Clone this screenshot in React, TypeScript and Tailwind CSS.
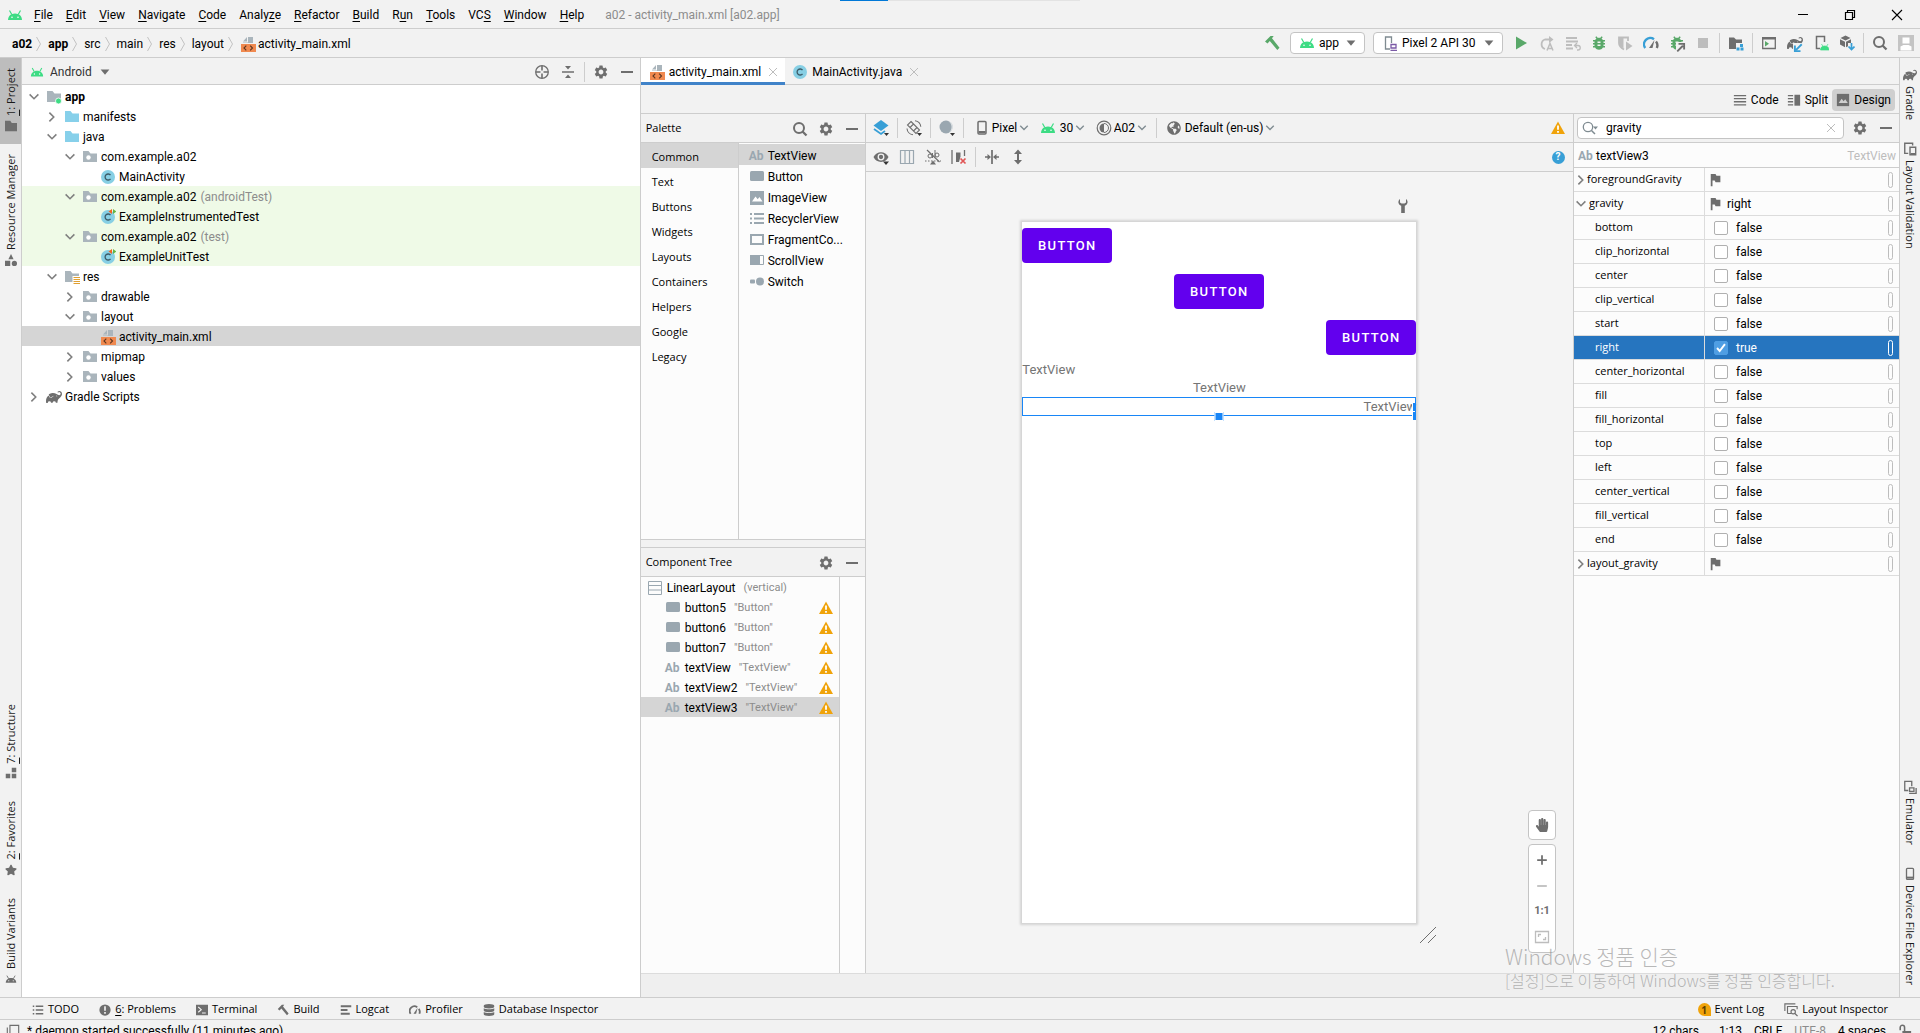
import React from 'react';
import { SiGradle } from 'react-icons/si';
import { MdSettings, MdBugReport } from 'react-icons/md';
import { FaHandPaper, FaDatabase, FaGlobeAmericas, FaStar } from 'react-icons/fa';

type IconProps = { className?: string };

const Svg: React.FC<{ className?: string; children: React.ReactNode }> = ({ className = 'w-4 h-4', children }) => (
  <svg viewBox="0 0 16 16" className={`shrink-0 ${className}`} fill="none" aria-hidden="true">
    {children}
  </svg>
);

/* ---------- Icons ---------- */

const AndroidIcon = ({ className }: IconProps) => (
  <Svg className={className}>
    <path d="M1 13C1 9.300 3.800 6.500 8 6.500S15 9.300 15 13Z" fill="currentColor" />
    <path d="M2.500 3.500 4.800 7.500M13.500 3.500 11.200 7.500" stroke="currentColor" strokeWidth="1.200" />
    <circle cx="5" cy="10.300" r=".8" fill="#fff" />
    <circle cx="11" cy="10.300" r=".8" fill="#fff" />
  </Svg>
);

const XmlFileIcon = ({ className }: IconProps) => (
  <Svg className={className}>
    <path d="M3 5.500 7 1v4.500ZM8 1h5v6H3V6.500h5Z" fill="#aab5bc" />
    <rect x="1" y="8" width="15" height="8" fill="#f0894f" />
    <path d="M6.300 9.700 4 12l2.300 2.300M10.200 9.700 12.500 12l-2.300 2.300" stroke="#5c3620" strokeWidth="1.100" />
  </Svg>
);

const ClassIcon = ({ className, test }: IconProps & { test?: boolean }) => (
  <Svg className={className}>
    <circle cx="8" cy="8" r="7" fill="#87cfe4" />
    <path d="M10.500 6.200a3 3 0 1 0 0 3.600" stroke="#3c5a66" strokeWidth="1.300" />
    {test && (
      <>
        <path d="M12 0v5L8.500 2.500Z" fill="#f26522" />
        <path d="M13 0v5l3.500-2.500Z" fill="#62b543" />
      </>
    )}
  </Svg>
);

const FolderIcon = ({ kind }: { kind: 'module' | 'blue' | 'package' | 'res' }) => (
  <Svg>
    <path d="M1 2h5.500L8.500 4.500H15V13H1Z" fill={kind === 'blue' ? '#87d0ea' : '#aab5bc'} />
    {kind === 'package' && <circle cx="6.500" cy="8.500" r="2.200" fill="#fff" />}
    {kind === 'module' && <circle cx="12.500" cy="12" r="3" fill="#3ddc84" stroke="#fff" strokeWidth=".8" />}
    {kind === 'res' && (
      <>
        <rect x="8.500" y="7" width="7.500" height="9" fill="#fff" />
        <path d="M9.500 8.500H16M9.500 10.500H16M9.500 12.500H16M9.500 14.500H16" stroke="#e0a030" />
      </>
    )}
  </Svg>
);

const SearchIcon = ({ className }: IconProps) => (
  <Svg className={className}>
    <circle cx="7" cy="7" r="5" stroke="currentColor" strokeWidth="2" />
    <path d="m10.500 10.500 4 4" stroke="currentColor" strokeWidth="2.300" />
  </Svg>
);

const MinusIcon = ({ className }: IconProps) => (
  <Svg className={className}>
    <path d="M2 8h12" stroke="currentColor" strokeWidth="2" />
  </Svg>
);

const CloseIcon = ({ className }: IconProps) => (
  <Svg className={className}>
    <path d="m4 4 8 8M12 4l-8 8" stroke="currentColor" />
  </Svg>
);

const CaretIcon = ({ className }: IconProps) => (
  <Svg className={className}>
    <path d="M3 5h10l-5 6Z" fill="currentColor" />
  </Svg>
);

const ChevronDown = ({ className }: IconProps) => (
  <Svg className={className}>
    <path d="m3 5 5 5 5-5" stroke="currentColor" strokeWidth="1.800" />
  </Svg>
);

const ChevronRight = ({ className }: IconProps) => (
  <Svg className={className}>
    <path d="m5 3 5 5-5 5" stroke="currentColor" strokeWidth="1.800" />
  </Svg>
);

const HammerIcon = ({ className }: IconProps) => (
  <Svg className={className}>
    <path d="M1 6.500 6.500 1h3.200L8 3.200 15.500 12.800 13.300 15 5.800 6 3.500 8.500Z" fill="currentColor" />
  </Svg>
);

const WarningIcon = ({ className }: IconProps) => (
  <Svg className={className}>
    <path d="M8 1.500 15 14H1Z" fill="#f0a30a" />
    <path d="M8 5.500v4.300M8 11v1.800" stroke="#fff" strokeWidth="1.800" />
  </Svg>
);

const GaugeIcon = ({ className, accent = 'currentColor' }: IconProps & { accent?: string }) => (
  <Svg className={className}>
    <path d="M2.200 13A6.300 6.300 0 0 1 11 4.200" stroke={accent} strokeWidth="2.400" />
    <path d="M13 6.500A6.300 6.300 0 0 1 13.800 13" stroke="currentColor" strokeWidth="2.400" />
    <path d="M6 13 11.500 5 9.500 13Z" fill="currentColor" />
  </Svg>
);

const FlagIcon = () => (
  <Svg className="w-3.5 h-3.5">
    <path d="M2 1h5.500l1 2H13v7.500H7.500l-1-2H4V15H2Z" fill="#6e6e6e" />
  </Svg>
);

const ImageIcon = ({ className, hill = '#fff' }: IconProps & { hill?: string }) => (
  <Svg className={className}>
    <path d="M1 1h14v14H1Z" fill="currentColor" />
    <path d="m3 11.500 3.500-5 2.200 2.800 1.800-2.300 3 4.500Z" fill={hill} />
  </Svg>
);

const ButtonWidgetIcon = () => (
  <Svg>
    <rect x="1" y="2" width="14" height="10" rx="1.500" fill="#9aa7b0" />
  </Svg>
);

const PhoneIcon = ({ className }: IconProps) => (
  <Svg className={className}>
    <rect x="4" y="1.500" width="8" height="12.500" rx="1" stroke="currentColor" strokeWidth="1.500" />
    <path d="M4.500 12h7" stroke="currentColor" strokeWidth="2" />
  </Svg>
);

const AbIcon = () => <span className="w-4 shrink-0 text-xs leading-4 font-bold text-[#9aa7b0]">Ab</span>;

/* ---------- Small shared parts ---------- */

const Separator = () => <div className="w-px h-5 bg-[#cdcdcd] shrink-0" />;

const IconButton: React.FC<{ label: string; className?: string; children: React.ReactNode }> = ({ label, className = '', children }) => (
  <button aria-label={label} className={`w-4 h-4 shrink-0 flex items-center justify-center text-[#6e6e6e] ${className}`}>
    {children}
  </button>
);

// Label with the mnemonic letter underlined
const Mnemonic = ({ text, at }: { text: string; at: number }) => (
  <>
    {text.slice(0, at)}
    <span className="underline underline-offset-2">{text[at]}</span>
    {text.slice(at + 1)}
  </>
);

const PlainSelect: React.FC<{ label: string; value: string; icon: React.ReactNode; className?: string; caret?: React.ReactNode }> = ({
  label,
  value,
  icon,
  className = '',
  caret,
}) => (
  <label className={`flex items-center shrink-0 ${className}`}>
    {icon}
    <select aria-label={label} className="appearance-none bg-transparent text-xs outline-none">
      <option>{value}</option>
    </select>
    {caret || <ChevronDown className="w-3 h-3 text-[#7f8b91]" />}
  </label>
);

/* ---------- Header ---------- */

const menus: [string, number][] = [
  ['File', 0], ['Edit', 0], ['View', 0], ['Navigate', 0], ['Code', 0], ['Analyze', 5], ['Refactor', 0],
  ['Build', 0], ['Run', 1], ['Tools', 0], ['VCS', 2], ['Window', 0], ['Help', 0],
];

const TitleBar = () => (
  <header className="relative flex items-center h-[29px] shrink-0 border-b border-[#cdcdcd] pt-0.5">
    <div className="absolute top-0 left-1/2 -translate-x-1/2 flex w-60 h-px bg-[#e3e3e3]">
      <div className="w-12 bg-[#0078d7]" />
    </div>
    <AndroidIcon className="ml-[7px] w-4 h-4 text-[#3ddc84]" />
    <nav className="flex items-center gap-[13px] ml-[11px]">
      {menus.map(([text, at]) => (
        <button key={text}>
          <Mnemonic text={text} at={at} />
        </button>
      ))}
    </nav>
    <span className="ml-[21px] text-[#8c8c8c]">a02 - activity_main.xml [a02.app]</span>
    <div className="flex ml-auto text-black">
      <button aria-label="Minimize" className="w-[47px] flex justify-center">
        <Svg><path d="M3 7.500h10" stroke="currentColor" /></Svg>
      </button>
      <button aria-label="Restore" className="w-[47px] flex justify-center">
        <Svg><path d="M3.500 5.500h7v7h-7ZM5.500 5.500v-2h7v7h-2" stroke="currentColor" strokeWidth="1.200" /></Svg>
      </button>
      <button aria-label="Close" className="w-[47px] flex justify-center">
        <Svg><path d="m3 3 10 10M13 3 3 13" stroke="currentColor" strokeWidth="1.100" /></Svg>
      </button>
    </div>
  </header>
);

const crumbs = ['a02', 'app', 'src', 'main', 'res', 'layout'];

const NavBar = () => (
  <div className="flex items-center h-[29px] shrink-0 border-b border-[#cdcdcd] pl-3 pr-1.5">
    <div className="flex items-center pt-0.5">
      {crumbs.map((c, i) => (
        <React.Fragment key={c}>
          <a href="#" className={i < 2 ? 'font-bold' : ''}>{c}</a>
          <svg viewBox="0 0 5 16" className="w-[5px] h-4 ml-1 mr-[7px]" fill="none">
            <path d="m.5 1 4 7-4 7" stroke="#c3c3c3" />
          </svg>
        </React.Fragment>
      ))}
      <XmlFileIcon className="w-4 h-4 mr-0.5" />
      <a href="#">activity_main.xml</a>
    </div>
    <div className="flex items-center gap-2.5 ml-auto">
      <IconButton label="Make Project" className="text-[#59a869]"><HammerIcon /></IconButton>
      <PlainSelect
        label="Run configuration"
        value="app"
        icon={<AndroidIcon className="w-4 h-4 mr-1 text-[#3ddc84]" />}
        caret={<CaretIcon className="w-3.5 h-3.5 ml-1 text-[#6e6e6e]" />}
        className="h-[22px] pl-2 pr-1.5 -mr-0.5 bg-white border border-[#c4c4c4] rounded"
      />
      <PlainSelect
        label="Device"
        value="Pixel 2 API 30"
        icon={
          <Svg className="w-4 h-4 mr-1">
            <path d="M8 14H3.500V2h6v6" stroke="#7f8b91" strokeWidth="1.300" />
            <path d="M9 9.500h5V13H9ZM8.500 15.300h6.500" stroke="#7b5aa6" strokeWidth="1.300" />
          </Svg>
        }
        caret={<CaretIcon className="w-3.5 h-3.5 ml-1.5 text-[#6e6e6e]" />}
        className="h-[22px] pl-2 pr-1.5 bg-white border border-[#c4c4c4] rounded"
      />
      <IconButton label="Run" className="text-[#59a869]">
        <Svg><path d="M3 1.500 14 8 3 14.500Z" fill="currentColor" /></Svg>
      </IconButton>
      <IconButton label="Apply Changes" className="text-[#bdbdbd]">
        <Svg>
          <path d="M6 14A5 5 0 0 1 6 4.500h5" stroke="currentColor" strokeWidth="1.800" />
          <path d="M10 1v7l4.500-3.500Z" fill="currentColor" />
          <path d="m8 15.500 3-7 3 7M9 13.500h4" stroke="currentColor" strokeWidth="1.500" />
        </Svg>
      </IconButton>
      <IconButton label="Apply Code Changes" className="text-[#bdbdbd]">
        <Svg>
          <path d="M1 3h11M1 6.500h12M1 10h6M1 13.500h7" stroke="currentColor" strokeWidth="1.800" />
          <path d="M10 10.500h3a2 2 0 0 1 0 4.500h-1M12 8l-2.500 2.500L12 13" stroke="currentColor" strokeWidth="1.300" />
        </Svg>
      </IconButton>
      <IconButton label="Debug" className="text-[#59a869]"><MdBugReport className="w-[18px] h-[18px] shrink-0" /></IconButton>
      <IconButton label="Coverage" className="text-[#bdbdbd]">
        <Svg>
          <path d="M11 6V2.500H2V8c0 3 2 5 5 6.500" stroke="currentColor" strokeWidth="1.800" />
          <path d="M2 2.500h4.500v11C3.500 12 2 10 2 8Z" fill="currentColor" />
          <path d="m9 6.500 6.500 4.500L9 15.500Z" fill="currentColor" />
        </Svg>
      </IconButton>
      <IconButton label="Profile"><GaugeIcon accent="#389fd6" /></IconButton>
      <IconButton label="Attach Debugger" className="relative text-[#59a869]">
        <MdBugReport className="w-[18px] h-[18px] shrink-0" />
        <Svg className="absolute w-2.5 h-2.5 -right-px -bottom-px">
          <rect width="16" height="16" fill="#f2f2f2" />
          <path d="m2 15 9-9M4 3h9v9" stroke="#6e6e6e" strokeWidth="3" />
        </Svg>
      </IconButton>
      <IconButton label="Stop" className="text-[#bdbdbd]">
        <Svg><path d="M3 3h10v10H3Z" fill="currentColor" /></Svg>
      </IconButton>
      <div className="-mx-0.5"><Separator /></div>
      <IconButton label="Project Structure">
        <Svg>
          <path d="M1 2.500h5l2 2h6V8H8v6H1Z" fill="currentColor" />
          <path d="M12 9h3v3h-3ZM8.500 12.500h3v3h-3ZM12.500 12.500h3v3h-3Z" fill="#389fd6" />
        </Svg>
      </IconButton>
      <div className="-mx-0.5"><Separator /></div>
      <IconButton label="Running Devices">
        <Svg>
          <path d="M1.700 3h12.600v10.500H1.700Z" stroke="currentColor" strokeWidth="1.300" />
          <path d="M1 2h14v2.500H1Z" fill="currentColor" />
          <path d="m4 6 4 2.700-4 2.800Z" fill="#59a869" />
        </Svg>
      </IconButton>
      <IconButton label="Sync Gradle" className="relative">
        <SiGradle className="w-4 h-4" />
        <Svg className="absolute w-2.5 h-2.5 right-0 -bottom-0.5">
          <rect width="16" height="16" fill="#f2f2f2" />
          <path d="m14 2-9 9M3 4v9h9" stroke="#389fd6" strokeWidth="3" />
        </Svg>
      </IconButton>
      <IconButton label="AVD Manager">
        <Svg>
          <path d="M7 13.500H3.500v-12h8V7" stroke="currentColor" strokeWidth="1.500" />
          <path d="M7.500 15c0-2.500 1.500-4 4.200-4s4.300 1.500 4.300 4ZM8.500 9l1.500 2.500M15 9l-1.500 2.500" fill="#3ddc84" stroke="#3ddc84" strokeWidth=".7" />
        </Svg>
      </IconButton>
      <IconButton label="SDK Manager">
        <Svg>
          <path d="m6.500.5 5 2.500-5 2.500-5-2.500ZM1 4.200l5 2.500v5.500L1 9.500ZM12 4.200 7 6.700v5.500l2-1V8h3Z" fill="currentColor" />
          <path d="M12.500 8v6M9.500 11.500l3 3 3-3" stroke="#389fd6" strokeWidth="1.700" />
        </Svg>
      </IconButton>
      <div className="-mx-0.5"><Separator /></div>
      <IconButton label="Search Everywhere"><SearchIcon /></IconButton>
      <IconButton label="Account">
        <Svg>
          <rect width="16" height="16" fill="#c4c4c4" />
          <path d="M4.500 2.500h7v6h-7ZM2.500 15.500v-4l3-1.500h5l3 1.500v4Z" fill="#fff" />
        </Svg>
      </IconButton>
    </div>
  </div>
);

/* ---------- Tool window strips ---------- */

const StripButton: React.FC<{ side: 'left' | 'right'; icon: React.ReactNode; active?: boolean; children: React.ReactNode }> = ({ side, icon, active, children }) => (
  <button className={`flex flex-col items-center gap-1 w-full pt-2.5 pb-3 text-[11px] font-['Open_Sans',sans-serif] text-[#1a1a1a] ${active ? 'bg-[#bdbdbd]' : ''}`}>
    {side === 'right' && icon}
    <span className={`[writing-mode:vertical-rl] leading-4 whitespace-nowrap ${side === 'left' ? 'rotate-180 [text-underline-position:left]' : ''}`}>
      {children}
    </span>
    {side === 'left' && icon}
  </button>
);

const LeftStrip = () => (
  <aside className="flex flex-col w-[22px] shrink-0 border-r border-[#cdcdcd]">
    <StripButton side="left" active icon={<Svg className="w-3 h-3 text-[#6e6e6e]"><path d="M0 1h7l2 3h7v11H0Z" fill="currentColor" /></Svg>}>
      <Mnemonic text="1: Project" at={0} />
    </StripButton>
    <StripButton
      side="left"
      icon={<Svg className="w-3 h-3 text-[#6e6e6e]"><path d="M8 0l3.500 7h-7ZM0 9h7v7H0Z" fill="currentColor" /><circle cx="12.500" cy="12.500" r="3.500" fill="currentColor" /></Svg>}
    >
      Resource Manager
    </StripButton>
    <div className="flex-1" />
    <StripButton side="left" icon={<Svg className="w-3 h-3 text-[#6e6e6e]"><path d="M1 9h6v6H1ZM9 9h6v6H9ZM9 1h6v6H9Z" fill="currentColor" /></Svg>}>
      <Mnemonic text="7: Structure" at={0} />
    </StripButton>
    <StripButton side="left" icon={<FaStar className="w-3 h-3 text-[#6e6e6e]" />}>
      <Mnemonic text="2: Favorites" at={0} />
    </StripButton>
    <StripButton side="left" icon={<AndroidIcon className="w-3 h-3 text-[#6e6e6e]" />}>Build Variants</StripButton>
  </aside>
);

const RightStrip = () => (
  <aside className="flex flex-col w-[21px] shrink-0 border-l border-[#cdcdcd]">
    <StripButton side="right" icon={<SiGradle className="w-3.5 h-3.5 text-[#6e6e6e]" />}>Gradle</StripButton>
    <StripButton
      side="right"
      icon={<Svg className="w-3.5 h-3.5 text-[#6e6e6e]"><path d="M6 13H2V1.500h9V4M8 6h6.500v8.500H8ZM9 13.500h5" stroke="currentColor" strokeWidth="1.600" /></Svg>}
    >
      Layout Validation
    </StripButton>
    <div className="flex-1" />
    <StripButton
      side="right"
      icon={<Svg className="w-3.5 h-3.5 text-[#6e6e6e]"><path d="M6 12H2V1.500h8V7M7.500 9h5v4h-5ZM7 15.300h8V9" stroke="currentColor" strokeWidth="1.500" /></Svg>}
    >
      Emulator
    </StripButton>
    <StripButton side="right" icon={<PhoneIcon className="w-3.5 h-3.5 text-[#6e6e6e]" />}>Device File Explorer</StripButton>
  </aside>
);

/* ---------- Project tree ---------- */

type TreeRow = {
  level: number;
  text: string;
  hint?: string;
  open?: boolean;
  icon: React.ReactNode;
  className?: string;
};

const projectRows: TreeRow[] = [
  { level: 0, text: 'app', open: true, icon: <FolderIcon kind="module" />, className: 'font-bold' },
  { level: 1, text: 'manifests', open: false, icon: <FolderIcon kind="blue" /> },
  { level: 1, text: 'java', open: true, icon: <FolderIcon kind="blue" /> },
  { level: 2, text: 'com.example.a02', open: true, icon: <FolderIcon kind="package" /> },
  { level: 3, text: 'MainActivity', icon: <ClassIcon /> },
  { level: 2, text: 'com.example.a02', hint: '(androidTest)', open: true, icon: <FolderIcon kind="package" />, className: 'bg-[#effae7]' },
  { level: 3, text: 'ExampleInstrumentedTest', icon: <ClassIcon test />, className: 'bg-[#effae7]' },
  { level: 2, text: 'com.example.a02', hint: '(test)', open: true, icon: <FolderIcon kind="package" />, className: 'bg-[#effae7]' },
  { level: 3, text: 'ExampleUnitTest', icon: <ClassIcon test />, className: 'bg-[#effae7]' },
  { level: 1, text: 'res', open: true, icon: <FolderIcon kind="res" /> },
  { level: 2, text: 'drawable', open: false, icon: <FolderIcon kind="package" /> },
  { level: 2, text: 'layout', open: true, icon: <FolderIcon kind="package" /> },
  { level: 3, text: 'activity_main.xml', icon: <XmlFileIcon />, className: 'bg-[#d5d5d5]' },
  { level: 2, text: 'mipmap', open: false, icon: <FolderIcon kind="package" /> },
  { level: 2, text: 'values', open: false, icon: <FolderIcon kind="package" /> },
  { level: 0, text: 'Gradle Scripts', open: false, icon: <SiGradle className="w-4 h-4 text-[#6e6e6e]" /> },
];

const indents = ['pl-1', 'pl-[22px]', 'pl-10', 'pl-[58px]'];

const ProjectPanel = () => (
  <section className="flex flex-col flex-[618] min-w-0 bg-white">
    <div className="flex items-center h-[27px] shrink-0 pl-2 pr-[5px] pt-0.5 bg-[#f2f2f2] border-b border-[#cdcdcd]">
      <PlainSelect
        label="Project view"
        value="Android"
        icon={<AndroidIcon className="w-3.5 h-3.5 mr-1.5 text-[#3ddc84]" />}
        caret={<CaretIcon className="w-3.5 h-3.5 ml-1.5 text-[#6e6e6e]" />}
        className="text-[#333]"
      />
      <div className="flex items-center gap-2.5 ml-auto">
        <IconButton label="Select Opened File">
          <Svg>
            <circle cx="8" cy="8" r="6.300" stroke="currentColor" strokeWidth="1.300" />
            <path d="M8 2v4.500M8 9.500V14M2 8h4.500M9.500 8H14" stroke="currentColor" strokeWidth="1.600" />
          </Svg>
        </IconButton>
        <IconButton label="Collapse All">
          <Svg>
            <path d="M2 8h12" stroke="currentColor" strokeWidth="1.500" />
            <path d="M5 2h6L8 5.500ZM5 14h6l-3-3.500Z" fill="currentColor" />
          </Svg>
        </IconButton>
        <div className="-mx-0.5"><Separator /></div>
        <IconButton label="Settings"><MdSettings className="w-4 h-4" /></IconButton>
        <IconButton label="Hide"><MinusIcon /></IconButton>
      </div>
    </div>
    <ul className="pt-px">
      {projectRows.map((row, i) => (
        <li key={i} className={`flex items-center h-5 pt-0.5 ${indents[row.level]} ${row.className || ''}`}>
          <span className="w-4 mr-1 shrink-0 flex justify-center text-[#7f7f7f]">
            {row.open === true && <ChevronDown className="w-3.5 h-3.5" />}
            {row.open === false && <ChevronRight className="w-3.5 h-3.5" />}
          </span>
          {row.icon}
          <span className="ml-[3px]">{row.text}</span>
          {row.hint && <span className="ml-1 text-[#8c8c8c]">{row.hint}</span>}
        </li>
      ))}
    </ul>
  </section>
);

/* ---------- Palette + component tree ---------- */

const categories = ['Common', 'Text', 'Buttons', 'Widgets', 'Layouts', 'Containers', 'Helpers', 'Google', 'Legacy'];

const paletteItems: { text: string; icon: React.ReactNode }[] = [
  { text: 'TextView', icon: <AbIcon /> },
  { text: 'Button', icon: <ButtonWidgetIcon /> },
  { text: 'ImageView', icon: <ImageIcon className="w-4 h-4 text-[#9aa7b0]" /> },
  {
    text: 'RecyclerView',
    icon: <Svg><path d="M1 3h2M5 3h10M1 7.500h2M5 7.500h10M1 12h2M5 12h10" stroke="#9aa7b0" strokeWidth="2" /></Svg>,
  },
  { text: 'FragmentCo...', icon: <Svg><path d="M2 3h12v9H2Z" stroke="#9aa7b0" strokeWidth="2" /></Svg> },
  {
    text: 'ScrollView',
    icon: <Svg><path d="M1.500 2.500h13v9h-13Z" stroke="#9aa7b0" /><path d="M1 2h10v10H1Z" fill="#9aa7b0" /></Svg>,
  },
  {
    text: 'Switch',
    icon: <Svg><rect x="1" y="5.500" width="5" height="4" rx="1" fill="#9aa7b0" /><circle cx="11" cy="7.500" r="4" fill="#9aa7b0" /></Svg>,
  },
];

const components = [
  { id: 'button5', hint: '"Button"', text: false },
  { id: 'button6', hint: '"Button"', text: false },
  { id: 'button7', hint: '"Button"', text: false },
  { id: 'textView', hint: '"TextView"', text: true },
  { id: 'textView2', hint: '"TextView"', text: true },
  { id: 'textView3', hint: '"TextView"', text: true },
];

const PalettePanel = () => (
  <section className="flex flex-col w-[225px] shrink-0 border-r border-[#cdcdcd] bg-[#fcfcfc]">
    <div className="flex items-center h-[29px] shrink-0 px-[5px] pt-px bg-[#f2f2f2] border-b border-[#cdcdcd]">
      <h2 className="text-[11px] font-['Open_Sans',sans-serif]">Palette</h2>
      <div className="flex items-center gap-2.5 ml-auto">
        <IconButton label="Search Palette"><SearchIcon /></IconButton>
        <IconButton label="Palette Settings"><MdSettings className="w-4 h-4" /></IconButton>
        <IconButton label="Hide Palette"><MinusIcon /></IconButton>
      </div>
    </div>
    <div className="flex flex-1 min-h-0">
      <ul className="w-[98px] border-r border-[#cdcdcd] text-[11px] font-['Open_Sans',sans-serif]">
        {categories.map((c) => (
          <li key={c} className={`flex items-center h-[25px] pt-1 pl-[11px] ${c === 'Common' ? 'bg-[#d5d5d5]' : ''}`}>{c}</li>
        ))}
      </ul>
      <ul className="flex-1 pt-px">
        {paletteItems.map((item, i) => (
          <li key={item.text} className={`flex items-center gap-[3px] h-[21px] pt-0.5 pl-2.5 ${i === 0 ? 'bg-[#d5d5d5]' : ''}`}>
            {item.icon}
            {item.text}
          </li>
        ))}
      </ul>
    </div>
    <div className="h-[9px] shrink-0 bg-[#f2f2f2] border-y border-[#cdcdcd]" />
    <div className="flex items-center h-[29px] shrink-0 px-[5px] pt-px bg-[#f2f2f2] border-b border-[#cdcdcd]">
      <h2 className="text-[11px] font-['Open_Sans',sans-serif]">Component Tree</h2>
      <div className="flex items-center gap-2.5 ml-auto">
        <IconButton label="Component Tree Settings"><MdSettings className="w-4 h-4" /></IconButton>
        <IconButton label="Hide Component Tree"><MinusIcon /></IconButton>
      </div>
    </div>
    <div className="flex flex-1 min-h-0">
      <ul className="w-[199px] border-r border-[#cdcdcd]">
        <li className="flex items-center h-5 pt-0.5 pl-1.5">
          <Svg><path d="M1.500 1.500h13v13h-13ZM2 5.500h12M2 10h12" stroke="#9aa7b0" /></Svg>
          <span className="ml-1">LinearLayout</span>
          <span className="ml-2 text-[11px] text-[#8c8c8c]">(vertical)</span>
        </li>
        {components.map((c) => (
          <li key={c.id} className={`flex items-center h-5 pt-0.5 pl-6 pr-[5px] ${c.id === 'textView3' ? 'bg-[#d5d5d5]' : ''}`}>
            {c.text ? <AbIcon /> : <ButtonWidgetIcon />}
            <span className="ml-1">{c.id}</span>
            <span className="ml-2 text-[11px] text-[#8c8c8c]">{c.hint}</span>
            <WarningIcon className="w-4 h-4 ml-auto" />
          </li>
        ))}
      </ul>
    </div>
  </section>
);

/* ---------- Design surface ---------- */

const PreviewButton = ({ className }: IconProps) => (
  <button className={`w-[90px] h-[35px] rounded bg-[#6200ee] text-white text-[13px] font-medium tracking-widest ${className}`}>BUTTON</button>
);

const Corner = () => <path d="M11 13h5l-2.500 3Z" fill="#333" />;

const DesignSurface = () => (
  <section className="flex flex-col flex-[707] min-w-0 bg-[#f4f4f4]">
    <div className="flex items-center h-[29px] shrink-0 bg-[#f2f2f2] border-b border-[#cdcdcd] px-[7px]">
      <div className="flex items-center gap-2 mr-2.5">
        <IconButton label="Design Surface">
          <Svg>
            <path d="M8 0l7.500 5.500L8 11 .5 5.500Z" fill="#389fd6" />
            <path d="m1 9 7 5 4-3" stroke="#389fd6" strokeWidth="1.800" />
            <Corner />
          </Svg>
        </IconButton>
        <Separator />
        <IconButton label="Orientation">
          <Svg>
            <path d="M5 1.500 13.500 10 10 13.500 1.500 5ZM7.500 4 4 7.500M11 7.500 7.500 11" stroke="currentColor" strokeWidth="1.100" />
            <path d="M9 .8a6.800 6.800 0 0 1 5.800 6M1 8.500a6.800 6.800 0 0 0 6 6.300" stroke="currentColor" strokeWidth="1.100" />
            <Corner />
          </Svg>
        </IconButton>
        <Separator />
        <IconButton label="Night Mode">
          <Svg>
            <circle cx="7" cy="7" r="6.500" fill="#9aa7b0" />
            <path d="M9 1a6 6 0 0 1 1 11.500A7 7 0 0 0 9 1Z" fill="#dce1e4" />
            <Corner />
          </Svg>
        </IconButton>
        <Separator />
      </div>
      <PlainSelect label="Preview device" value="Pixel" icon={<PhoneIcon className="w-4 h-4 mr-0.5 text-[#6e6e6e]" />} className="mr-2.5" />
      <PlainSelect label="API version" value="30" icon={<AndroidIcon className="w-4 h-4 mr-1 text-[#3ddc84]" />} className="mr-2.5" />
      <PlainSelect
        label="Theme"
        value="A02"
        icon={
          <Svg className="w-4 h-4 mr-0.5">
            <circle cx="8" cy="8" r="6.800" stroke="#6e6e6e" strokeWidth="1.200" />
            <path d="M8 3.500a4.500 4.500 0 0 0 0 9Z" fill="#6e6e6e" />
            <path d="M8 3.500a4.500 4.500 0 0 1 0 9" stroke="#6e6e6e" />
          </Svg>
        }
        className="mr-2"
      />
      <Separator />
      <PlainSelect label="Locale" value="Default (en-us)" icon={<FaGlobeAmericas className="w-3.5 h-3.5 mr-1 text-[#6e6e6e]" />} className="ml-2.5" />
      <button aria-label="Warnings" className="ml-auto"><WarningIcon /></button>
    </div>
    <div className="flex items-center gap-2.5 h-[29px] shrink-0 bg-[#f2f2f2] border-b border-[#cdcdcd] px-[7px]">
      <IconButton label="View Options">
        <Svg>
          <path d="M.5 8C3.500 1.500 12.500 1.500 15.500 8 12.500 14.500 3.500 14.500.5 8Z" fill="currentColor" />
          <circle cx="8" cy="8" r="2.800" fill="#6e6e6e" stroke="#f2f2f2" strokeWidth="1.300" />
          <path d="M10 12.500h6L13 16Z" fill="#333" />
        </Svg>
      </IconButton>
      <IconButton label="Columns">
        <Svg><path d="M1.500 1.500h13v13h-13ZM6 2v12M10.500 2v12" stroke="#9aa7b0" strokeWidth="1.200" /></Svg>
      </IconButton>
      <IconButton label="Default Constraints">
        <Svg>
          <path d="m2 1 12.500 12" stroke="currentColor" strokeWidth="1.200" />
          <circle cx="5" cy="7" r="2" stroke="currentColor" />
          <path d="M7.500 4v5M10 1v7" stroke="currentColor" />
          <circle cx="12" cy="6" r="2" stroke="currentColor" />
          <path d="M0 12h16" stroke="currentColor" strokeDasharray="1.500 1.500" />
          <path d="m5 15.500 3-4 3 4Z" fill="currentColor" />
        </Svg>
      </IconButton>
      <IconButton label="Clear Constraints">
        <Svg>
          <path d="M1 1v14M13.500 1v6" stroke="currentColor" strokeWidth="1.300" />
          <path d="M5 3.500h4.500v4L8 13H5Z" fill="currentColor" />
          <path d="m9.500 9.500 5 5M14.500 9.500l-5 5" stroke="#e05555" strokeWidth="1.700" />
        </Svg>
      </IconButton>
      <div className="-mx-0.5"><Separator /></div>
      <IconButton label="Pack Horizontally">
        <Svg>
          <path d="M8 1v14M1 8h4M11 8h4" stroke="currentColor" strokeWidth="1.700" />
          <path d="M3.500 5 7 8l-3.500 3ZM12.500 5 9 8l3.500 3Z" fill="currentColor" />
        </Svg>
      </IconButton>
      <IconButton label="Expand Vertically">
        <Svg>
          <path d="M8 4v8" stroke="currentColor" strokeWidth="2" />
          <path d="M4 5h8L8 .5ZM4 11h8l-4 4.500Z" fill="currentColor" />
        </Svg>
      </IconButton>
      <button aria-label="Help" className="ml-auto w-4 flex justify-center">
        <span className="flex items-center justify-center w-[13px] h-[13px] rounded-full bg-[#389fd6] text-white text-[10px] font-bold leading-none">?</span>
      </button>
    </div>

    <div className="relative flex justify-center flex-1 min-h-0 pt-[50px]">
      <div className="relative w-[394px] h-[701px] shrink-0 bg-white shadow-[0_0_2px_2px_#d4d4d4]">
        <Svg className="absolute -top-6 right-[5px] w-4 h-4">
          <path d="M5 1C2.500 3 3 6.500 6.200 7.800V15h3.600V7.800C13 6.500 13.500 3 11 1v3.500L9.500 5.500h-3L5 4.500Z" fill="#6e6e6e" />
        </Svg>
        <div className="flex flex-col gap-[11px] pt-1.5">
          <PreviewButton className="self-start" />
          <PreviewButton className="self-center" />
          <PreviewButton className="self-end" />
        </div>
        <div className="mt-1.5 text-[13px] leading-[18px] text-[#757575]">
          <p>TextView</p>
          <p className="text-center">TextView</p>
          <p className="relative h-[19px] text-right leading-5 outline-1 -outline-offset-1 outline-[#1886f7]">
            TextView
            <span className="absolute left-1/2 -bottom-[5px] w-[9px] h-[9px] -translate-x-1/2 bg-[#1886f7] border border-white" />
            <span className="absolute right-0 top-1.5 w-1 h-2 bg-[#1886f7] border-l border-white" />
            <span className="absolute right-0 -bottom-1 w-1 h-2 bg-[#1886f7] border-l border-white" />
          </p>
        </div>
        <svg viewBox="0 0 18 18" className="absolute -right-[21px] -bottom-[21px] w-[18px] h-[18px]" fill="none">
          <path d="M1 17 17 1M9 17l8-8" stroke="#6e6e6e" />
        </svg>
      </div>

      {/* Pan / zoom controls */}
      <div className="absolute right-[17px] bottom-5 flex flex-col gap-1 w-7 text-[#6e6e6e]">
        <button aria-label="Pan" className="flex items-center justify-center h-[30px] bg-white border border-[#c4c4c4] rounded">
          <FaHandPaper className="w-3.5 h-3.5" />
        </button>
        <div className="flex flex-col h-[109px] pt-0.5 pb-0.5 bg-white border border-[#c4c4c4] rounded">
          <button aria-label="Zoom In" className="flex flex-1 items-center justify-center">
            <Svg className="w-3.5 h-3.5"><path d="M2.500 8h11M8 2.500v11" stroke="currentColor" strokeWidth="2" /></Svg>
          </button>
          <button aria-label="Zoom Out" className="flex flex-1 items-center justify-center text-[#bdbdbd]">
            <Svg className="w-3.5 h-3.5"><path d="M2.500 8h11" stroke="currentColor" strokeWidth="2" /></Svg>
          </button>
          <button className="flex-1 text-[11px] font-bold">1:1</button>
          <button aria-label="Zoom to Fit" className="flex flex-1 items-center justify-center text-[#bdbdbd]">
            <Svg><path d="M1.500 2.500h13v11h-13ZM4.500 8V5.500H7M9 10.500h2.500V8" stroke="currentColor" strokeWidth="1.300" /></Svg>
          </button>
        </div>
      </div>
    </div>
  </section>
);

/* ---------- Attributes ---------- */

const flags = [
  'bottom', 'clip_horizontal', 'center', 'clip_vertical', 'start', 'right', 'center_horizontal',
  'fill', 'fill_horizontal', 'top', 'left', 'center_vertical', 'fill_vertical', 'end',
];

const Pill = ({ light }: { light?: boolean }) => (
  <span className={`w-[5px] h-4 ml-auto rounded-full border ${light ? 'border-white' : 'border-[#bdbdbd]'}`} />
);

const GroupRow = ({ name, value, open }: { name: string; value?: string; open?: boolean }) => (
  <tr>
    <td className="h-6 p-0 border-b border-r border-[#dcdcdc]">
      <div className="flex items-center text-[11px] font-['Open_Sans',sans-serif]">
        {open ? <ChevronDown className="w-3.5 h-3.5 mr-px text-[#7f7f7f]" /> : <ChevronRight className="w-3.5 h-3.5 -mr-px text-[#7f7f7f]" />}
        {name}
      </div>
    </td>
    <td className="h-6 p-0 border-b border-[#dcdcdc]">
      <div className="flex items-center gap-1 pl-1 pr-1.5">
        <FlagIcon />
        {value}
        <Pill />
      </div>
    </td>
  </tr>
);

const AttributesPanel = () => (
  <section className="flex flex-col w-[326px] shrink-0 border-l border-[#cdcdcd] bg-[#fcfcfc]">
    <div className="flex items-center gap-2.5 h-[29px] shrink-0 bg-[#f2f2f2] border-b border-[#cdcdcd] pl-[3px] pr-[5px]">
      <label className="flex items-center flex-1 h-[22px] -mr-0.5 bg-white border border-[#c4c4c4] rounded px-1">
        <Svg className="w-4 h-4 text-[#7f8b91]">
          <circle cx="6" cy="7" r="4.700" stroke="currentColor" strokeWidth="1.300" />
          <path d="m9.500 10.500 3.500 3.500" stroke="currentColor" strokeWidth="1.500" />
          <path d="M11 6.500h5l-2.500 3Z" fill="currentColor" />
        </Svg>
        <input aria-label="Search attributes" defaultValue="gravity" className="flex-1 min-w-0 ml-2 bg-transparent text-xs outline-none" />
        <CloseIcon className="w-4 h-4 text-[#bdbdbd]" />
      </label>
      <IconButton label="Attribute Settings"><MdSettings className="w-4 h-4" /></IconButton>
      <IconButton label="Hide Attributes"><MinusIcon /></IconButton>
    </div>
    <div className="flex items-center gap-0.5 h-[25px] shrink-0 pt-0.5 pl-1 pr-[3px] border-b border-[#cdcdcd]">
      <AbIcon />
      <span>textView3</span>
      <span className="ml-auto text-[#bdbdbd]">TextView</span>
    </div>
    <table className="w-full border-separate border-spacing-0 table-fixed">
      <colgroup>
        <col className="w-[131px]" />
        <col />
      </colgroup>
      <tbody>
        <GroupRow name="foregroundGravity" />
        <GroupRow name="gravity" value="right" open />
        {flags.map((flag) => {
          const on = flag === 'right';
          return (
            <tr key={flag} className={on ? 'bg-[#2675bf] text-white' : ''}>
              <td className="h-6 p-0 border-b border-r border-[#dcdcdc] pl-[21px] text-[11px] font-['Open_Sans',sans-serif]">{flag}</td>
              <td className="h-6 p-0 border-b border-[#dcdcdc]">
                <div className="flex items-center pl-[9px] pr-1.5">
                  <label className="flex items-center">
                    <span className="relative flex mr-2">
                      <input
                        type="checkbox"
                        defaultChecked={on}
                        className="peer appearance-none w-3.5 h-3.5 bg-white border border-[#b0b0b0] rounded-xs checked:bg-[#4f9ee3] checked:border-[#4f9ee3]"
                      />
                      <Svg className="absolute inset-0 hidden w-3.5 h-3.5 pointer-events-none peer-checked:block">
                        <path d="m3.500 8 3 3.500 6-8" stroke="#fff" strokeWidth="2.200" />
                      </Svg>
                    </span>
                    {on ? 'true' : 'false'}
                  </label>
                  <Pill light={on} />
                </div>
              </td>
            </tr>
          );
        })}
        <GroupRow name="layout_gravity" />
      </tbody>
    </table>
  </section>
);

/* ---------- Editor ---------- */

const Editor = () => (
  <main className="flex flex-col flex-[1259] min-w-0 border-l border-[#cdcdcd]">
    <div className="flex h-[27px] shrink-0 border-b border-[#cdcdcd]">
      <button className="flex items-center h-[27px] pt-1 pl-2 pr-1 bg-white border-b-3 border-[#4083c9]">
        <XmlFileIcon className="w-4 h-4 mr-1" />
        activity_main.xml
        <CloseIcon className="w-4 h-4 ml-1 text-[#bdbdbd]" />
      </button>
      <button className="flex items-center pt-0.5 pl-[7px]">
        <ClassIcon className="w-4 h-4 mr-1" />
        MainActivity.java
        <CloseIcon className="w-4 h-4 ml-1 text-[#bdbdbd]" />
      </button>
    </div>
    <div className="flex items-center justify-end h-[29px] shrink-0 pt-px pr-1 border-b border-[#cdcdcd]">
      <button className="flex items-center gap-1 px-1">
        <Svg className="w-3.5 h-3.5"><path d="M1 3h14M1 6.500h14M1 10h14M1 13.500h14" stroke="#6e6e6e" strokeWidth="1.500" /></Svg>
        Code
      </button>
      <button className="flex items-center gap-1 px-1">
        <Svg className="w-3.5 h-3.5"><path d="M1 3h6M1 6.500h6M1 10h6M1 13.500h6" stroke="#6e6e6e" strokeWidth="1.500" /><path d="M8.500 2H15v12.500H8.500Z" fill="#6e6e6e" /></Svg>
        Split
      </button>
      <button className="flex items-center gap-1 h-[22px] px-1 bg-[#cfcfcf] rounded-sm">
        <ImageIcon className="w-3.5 h-3.5 text-[#6e6e6e]" hill="#cfcfcf" />
        Design
      </button>
    </div>
    <div className="flex flex-1 min-h-0">
      <PalettePanel />
      <DesignSurface />
      <AttributesPanel />
    </div>
    <div className="h-6 shrink-0 bg-[#efefef] border-t border-[#dcdcdc]" />
  </main>
);

/* ---------- Bottom bars ---------- */

const bottomTabs: { text: string; at?: number; icon: React.ReactNode }[] = [
  { text: 'TODO', icon: <Svg className="w-3 h-3"><path d="M1 3h2M5 3h10M1 8h2M5 8h10M1 13h2M5 13h10" stroke="currentColor" strokeWidth="2" /></Svg> },
  {
    text: '6: Problems',
    at: 0,
    icon: <Svg className="w-3 h-3"><circle cx="8" cy="8" r="7.500" fill="currentColor" /><path d="M8 3v6M8 10.500V13" stroke="#f2f2f2" strokeWidth="2.200" /></Svg>,
  },
  { text: 'Terminal', icon: <Svg className="w-3 h-3"><path d="M0 1h16v14H0Z" fill="currentColor" /><path d="m3 4 4 3.500L3 11M8 12h5" stroke="#f2f2f2" strokeWidth="1.500" /></Svg> },
  { text: 'Build', icon: <HammerIcon className="w-3 h-3" /> },
  { text: 'Logcat', icon: <Svg className="w-3 h-3"><path d="M1 3h14M1 8h9M1 13h12" stroke="currentColor" strokeWidth="2.500" /></Svg> },
  { text: 'Profiler', icon: <GaugeIcon className="w-3 h-3" /> },
  { text: 'Database Inspector', icon: <FaDatabase className="w-3 h-3" /> },
];

const BottomBar = () => (
  <div className="flex items-center h-[23px] shrink-0 px-[22px] pt-0.5 border-y border-[#cdcdcd] text-[11px] font-['Open_Sans',sans-serif]">
    <div className="flex items-center">
      {bottomTabs.map((tab) => (
        <button key={tab.text} className="flex items-center gap-1 px-2.5">
          <span className="text-[#6e6e6e]">{tab.icon}</span>
          <span>{tab.at === undefined ? tab.text : <Mnemonic text={tab.text} at={tab.at} />}</span>
        </button>
      ))}
    </div>
    <div className="flex items-center ml-auto">
      <button className="flex items-center gap-1 px-2.5">
        <span className="flex items-center justify-center w-[13px] h-[13px] rounded-full rounded-br-none bg-[#f0a30a] text-[10px] leading-none text-[#5b3d00] font-bold">1</span>
        Event Log
      </button>
      <button className="flex items-center gap-1 px-2.5">
        <Svg className="w-3.5 h-3.5">
          <path d="M1 9V1h12M4 12V4h11v3M4 12h4" stroke="#6e6e6e" strokeWidth="1.300" />
          <circle cx="10.500" cy="10" r="2.500" stroke="#6e6e6e" strokeWidth="1.300" />
          <path d="m12.500 12 3 3" stroke="#6e6e6e" strokeWidth="1.500" />
        </Svg>
        Layout Inspector
      </button>
    </div>
  </div>
);

const StatusBar = () => (
  <footer className="flex items-start h-[13px] shrink-0 overflow-hidden pl-1.5 pr-2 leading-[22px]">
    <Svg className="w-3.5 h-3.5 mt-1 mr-[7px]">
      <path d="M4.500 1.500h10v13h-10ZM1.500 4v12" stroke="#6e6e6e" strokeWidth="1.300" />
    </Svg>
    <span>* daemon started successfully (11 minutes ago)</span>
    <div className="flex items-start ml-auto gap-3">
      <span className="mr-2">12 chars</span>
      <span>1:13</span>
      <span>CRLF</span>
      <span className="text-[#8c8c8c]">UTF-8</span>
      <span>4 spaces</span>
      <Svg className="w-3.5 h-3.5 mt-1">
        <path d="M2.500 7V4a2.500 2.500 0 0 1 5 0v4" stroke="#6e6e6e" strokeWidth="1.800" />
        <path d="M5 8h10v8H5Z" fill="#6e6e6e" />
      </Svg>
    </div>
  </footer>
);

const App: React.FC = () => {
  return (
    <div className="relative flex flex-col h-screen overflow-hidden bg-[#f2f2f2] text-black text-xs font-['Roboto','Noto_Sans_CJK_KR',sans-serif]">
      <TitleBar />
      <NavBar />
      <div className="flex flex-1 min-h-0">
        <LeftStrip />
        <ProjectPanel />
        <Editor />
        <RightStrip />
      </div>
      <BottomBar />
      <StatusBar />

      {/* Activation notice over the desktop corner */}
      <div className="absolute right-[79px] bottom-[43px] w-[336px] text-[#8a8a8a]/60 whitespace-nowrap font-light font-['Noto_Sans_CJK_KR',sans-serif] pointer-events-none">
        <p className="text-[21px] leading-7">Windows 정품 인증</p>
        <p className="text-base leading-5">[설정]으로 이동하여 Windows를 정품 인증합니다.</p>
      </div>
    </div>
  );
};

export default App;
